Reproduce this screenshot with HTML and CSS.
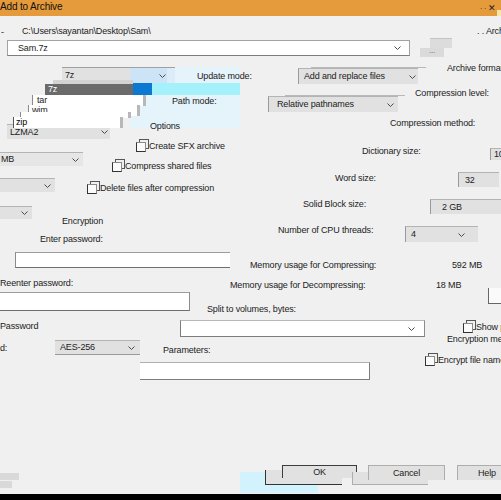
FILE: index.html
```html
<!DOCTYPE html>
<html lang="en">
<head>
<meta charset="utf-8">
<title>Add to Archive</title>
<link rel="stylesheet" href="styles.css">
</head>
<body>
<div class="dlg">
  <div class="titlebar">
    <span class="ttl">Add to Archive</span>
    <span class="dots">. .</span>
    <span class="close">&#x2715;</span>
    <span class="tb-edge"></span>
  </div>

  <div class="band b1">
    <span class="t dash">-</span>
    <span class="t path">C:\Users\sayantan\Desktop\Sam\</span>
    <span class="t arch">. . Archive:</span>
  </div>

  <div class="band b2">
    <div class="cw name-combo"><span>Sam.7z</span><svg class="chev" viewBox="0 0 7 4" width="7" height="4"><polyline points="0.5,0.5 3.5,3.5 6.5,0.5"/></svg></div>
    <div class="browse">
      <div class="browse-ghost"></div>
      <div class="browse-btn">...</div>
    </div>
  </div>

  <div class="band b3">
    <div class="fmt-wrap">
      <div class="fmt-panel"></div>
      <div class="cb fmt-combo"><span>7z</span><svg class="chev" viewBox="0 0 7 4" width="7" height="4"><polyline points="0.5,0.5 3.5,3.5 6.5,0.5"/></svg></div>
      <div class="dd dd-ghost"></div>
      <div class="dd dd-sel">7z</div>
      <div class="dd dd-blue"></div>
      <div class="dd dd-cyan"></div>
      <div class="dd dd-item dd-tar">tar</div>
      <div class="dd dd-item dd-wim">wim</div>
      <div class="dd dd-item dd-fill"></div>
      <div class="dd dd-item dd-zip">zip</div>
    </div>
    <span class="t lbl-update">Update mode:</span>
    <div class="cb upd-combo"><span>Add and replace files</span><svg class="chev" viewBox="0 0 7 4" width="7" height="4"><polyline points="0.5,0.5 3.5,3.5 6.5,0.5"/></svg></div>
    <span class="t lbl-format">Archive format</span>
  </div>

  <div class="band b4">
    <span class="t lbl-path">Path mode:</span>
    <div class="cb path-combo"><span>Relative pathnames</span><svg class="chev" viewBox="0 0 7 4" width="7" height="4"><polyline points="0.5,0.5 3.5,3.5 6.5,0.5"/></svg></div>
    <span class="t lbl-level">Compression level:</span>
  </div>

  <div class="band b5">
    <div class="cb lzma-combo"><span>LZMA2</span><svg class="chev" viewBox="0 0 7 4" width="7" height="4"><polyline points="0.5,0.5 3.5,3.5 6.5,0.5"/></svg></div>
    <span class="t lbl-options">Options</span>
    <span class="t lbl-method">Compression method:</span>
  </div>

  <div class="band b6">
    <div class="cb mb-combo"><span>MB</span><svg class="chev" viewBox="0 0 7 4" width="7" height="4"><polyline points="0.5,0.5 3.5,3.5 6.5,0.5"/></svg></div>
    <label class="chk chk-sfx"><span class="box"></span><span class="t">Create SFX archive</span></label>
    <span class="t lbl-dict">Dictionary size:</span>
    <div class="cb dict-combo"><span>10</span></div>
  </div>

  <div class="band b7">
    <div class="cb small1"><svg class="chev" viewBox="0 0 7 4" width="7" height="4"><polyline points="0.5,0.5 3.5,3.5 6.5,0.5"/></svg></div>
    <label class="chk chk-shared"><span class="box"></span><span class="t">Compress shared files</span></label>
    <span class="t lbl-word">Word size:</span>
    <div class="cb word-combo"><span>32</span></div>
  </div>

  <div class="band b8">
    <label class="chk chk-delete"><span class="box"></span><span class="t">Delete files after compression</span></label>
    <div class="cb block-combo"><span>2 GB</span></div>
  </div>

  <div class="band b9">
    <div class="cb small2"><svg class="chev" viewBox="0 0 7 4" width="7" height="4"><polyline points="0.5,0.5 3.5,3.5 6.5,0.5"/></svg></div>
    <span class="t lbl-enc">Encryption</span>
    <span class="t lbl-block">Solid Block size:</span>
  </div>

  <div class="band b10">
    <span class="t lbl-pass">Enter password:</span>
    <span class="t lbl-cpu">Number of CPU threads:</span>
    <div class="cb cpu-combo"><span>4</span><svg class="chev" viewBox="0 0 7 4" width="7" height="4"><polyline points="0.5,0.5 3.5,3.5 6.5,0.5"/></svg></div>
  </div>

  <div class="band b11">
    <div class="cw pass-input"></div>
    <span class="t lbl-memc">Memory usage for Compressing:</span>
    <span class="t val-memc">592 MB</span>
  </div>

  <div class="band b12">
    <span class="t lbl-repass">Reenter password:</span>
    <span class="t lbl-memd">Memory usage for Decompressing:</span>
    <span class="t val-memd">18 MB</span>
    <div class="ghost-box"></div>
  </div>

  <div class="band b13">
    <div class="cw repass-input"></div>
    <span class="t lbl-split">Split to volumes, bytes:</span>
  </div>

  <div class="band b14">
    <span class="t lbl-password">Password</span>
    <div class="cw split-combo"><svg class="chev" viewBox="0 0 7 4" width="7" height="4"><polyline points="0.5,0.5 3.5,3.5 6.5,0.5"/></svg></div>
    <label class="chk chk-show"><span class="box"></span><span class="t">Show password</span></label>
  </div>

  <div class="band b15">
    <span class="t lbl-d">d:</span>
    <div class="cb aes-combo"><span>AES-256</span><svg class="chev" viewBox="0 0 7 4" width="7" height="4"><polyline points="0.5,0.5 3.5,3.5 6.5,0.5"/></svg></div>
    <span class="t lbl-params">Parameters:</span>
    <span class="t lbl-encm">Encryption method:</span>
  </div>

  <div class="band b16">
    <div class="cw params-input"></div>
    <label class="chk chk-names"><span class="box"></span><span class="t">Encrypt file names</span></label>
  </div>

  <div class="spacer"></div>

  <div class="band buttons">
    <div class="ghost-gray"></div>
    <div class="ok-wrap">
      <div class="ok-cyan"></div>
      <div class="ok-ghost"></div>
      <button class="btn ok">OK</button>
    </div>
    <div class="cancel-wrap">
      <div class="btn-ghost"></div>
      <button class="btn cancel">Cancel</button>
    </div>
    <button class="btn help">Help</button>
  </div>

  <div class="bottom-bar"></div>
</div>
</body>
</html>
```

FILE: styles.css
```css
html, body {
  margin: 0;
  padding: 0;
}
body {
  background: #f0f0f0;
  font-family: "Liberation Sans", Arial, sans-serif;
  font-size: 9px;
  letter-spacing: -0.15px;
  color: #222;
}
.dlg {
  width: 501px;
  height: 500px;
  overflow: hidden;
  display: flex;
  flex-direction: column;
}

/* title bar */
.titlebar {
  height: 16px;
  flex: none;
  background: #e59a3b;
  display: flex;
  align-items: flex-start;
}
.ttl {
  font-size: 10px;
  line-height: 14px;
  color: #111;
}
.dots {
  margin-left: auto;
  line-height: 14px;
  color: #333;
  font-size: 8px;
}
.close {
  font-size: 9px;
  line-height: 14px;
  margin-left: 2px;
  margin-top: 1px;
  color: #222;
}
.tb-edge {
  width: 4px;
  height: 6px;
  margin-top: 10px;
  margin-left: 1px;
  background: #f5e7a6;
}

/* generic */
.band {
  display: flex;
  align-items: flex-start;
  flex: none;
}
.t {
  line-height: 11px;
  white-space: nowrap;
  flex: none;
}
.chev {
  flex: none;
  margin-left: auto;
}
.chev polyline {
  fill: none;
  stroke: #4a4a4a;
  stroke-width: 1;
}
.cb {
  flex: none;
  display: flex;
  align-items: center;
  background: #e1e1e1;
  border-top: 1px solid #b4b4b4;
  box-sizing: border-box;
  white-space: nowrap;
  line-height: 11px;
  position: relative;
}
.cw {
  flex: none;
  display: flex;
  align-items: center;
  background: #fff;
  box-sizing: border-box;
  white-space: nowrap;
  line-height: 11px;
}
.chk {
  flex: none;
  display: flex;
  align-items: flex-start;
}
.chk .box {
  width: 10px;
  height: 10px;
  box-sizing: border-box;
  border-left: 1px solid #333;
  border-bottom: 1px solid #333;
  border-top: 1px solid #8a8a8a;
  border-right: 1px solid #8a8a8a;
  background: #fbfbfb;
  flex: none;
  margin-top: 1px;
  margin-right: 3px;
  box-shadow: 3px -3px 0 -1px #f0f0f0, 3px -3px 0 0 #555;
}

/* band heights */
.b1 { height: 24px; }
.b2 { height: 20px; }
.b3 { height: 32px; }
.b4 { height: 27px; }
.b5 { height: 21px; }
.b6 { height: 22px; }
.b7 { height: 22px; }
.b8 { height: 19px; }
.b9 { height: 22px; }
.b10 { height: 20px; }
.b11 { height: 25px; }
.b12 { height: 22px; }
.b13 { height: 25px; }
.b14 { height: 22px; }
.b15 { height: 20px; }
.b16 { height: 25px; }
.spacer { height: 76px; flex: none; }

/* band 1 */
.dash { width: 4px; margin-left: 1px; margin-top: 11px; }
.path { width: 455px; margin-left: 17px; margin-top: 10px; }
.arch { margin-top: 10px; }

/* band 2 */
.name-combo {
  margin-left: 7px;
  width: 403px;
  height: 16px;
  border: 1px solid #a2a2a2;
  border-bottom-color: #7d7d7d;
  padding-left: 10px;
}
.name-combo .chev { margin-right: 8px; }
.browse {
  margin-left: 10px;
  margin-top: -2px;
  display: flex;
  flex-direction: column;
}
.browse-ghost {
  margin-left: 10px;
  width: 22px;
  height: 9px;
  background: #dcdcdc;
  border-top: 1px solid #c4c4c4;
}
.browse-btn {
  width: 24px;
  height: 9px;
  background: #dadada;
  font-size: 8px;
  line-height: 6px;
  text-align: center;
  color: #555;
}

/* band 3 */
.fmt-wrap {
  position: relative;
  margin-left: 62px;
  margin-top: 7px;
  width: 113px;
  height: 16px;
  flex: none;
}
.fmt-panel {
  position: absolute;
  left: 68px;
  top: 0;
  width: 110px;
  height: 61px;
  background: #e5f3fb;
  z-index: -1;
}
.fmt-combo {
  width: 113px;
  height: 16px;
  padding-left: 3px;
  background: linear-gradient(to right, #e1e1e1 0, #e1e1e1 68px, #cde4f6 68px, #cde4f6 105px, #dcedf9 105px);
  border-top-color: #a0a0a0;
  z-index: 2;
}
.fmt-combo .chev { margin-right: 9px; }
.dd {
  position: absolute;
  z-index: 3;
  box-sizing: border-box;
  line-height: 11px;
}
.dd-ghost { left: -9px; top: 13px; width: 80px; height: 4px; background: #d3d3d3; }
.dd-sel {
  left: -17px; top: 17px; width: 88px; height: 11px;
  background: #6b6b6b; color: #fff; padding-left: 3px;
}
.dd-blue { left: 71px; top: 16px; width: 20px; height: 12px; background: #0b78d2; }
.dd-cyan { left: 90px; top: 16px; width: 88px; height: 12px; background: #a4f1fc; }
.dd-item {
  background: #fff;
  border-left: 1px solid #8a8a8a;
  box-shadow: 3px 0 0 #b8b8b8;
  height: 11px;
}
.dd-tar { left: -30px; top: 28px; width: 111px; padding-left: 4px; }
.dd-wim { left: -34px; top: 38px; width: 109px; padding-left: 3px; }
.dd-fill { left: -42px; top: 45px; width: 108px; height: 6px; }
.dd-zip { left: -49px; top: 50px; width: 107px; padding-left: 2px; border-left-color: #555; color: #000; }

.lbl-update { margin-left: 22px; margin-top: 11px; width: 101px; }
.upd-combo {
  margin-top: 8px;
  width: 120px;
  height: 16px;
  padding-left: 5px;
  border-left: 1px solid #9a9a9a;
}
.upd-combo::after {
  content: "";
  position: absolute;
  left: 12px;
  top: -2px;
  width: 115px;
  height: 1px;
  background: #b8b8b8;
}
.upd-combo .chev { margin-right: 2px; }
.lbl-format { margin-left: 29px; margin-top: 3px; }

/* band 4 */
.lbl-path { margin-left: 172px; margin-top: 4px; width: 96px; }
.path-combo {
  margin-top: 4px;
  width: 130px;
  height: 16px;
  padding-left: 8px;
  border-left: 1px solid #9a9a9a;
}
.path-combo::after {
  content: "";
  position: absolute;
  left: 16px;
  top: -2px;
  width: 120px;
  height: 1px;
  background: #b8b8b8;
}
.path-combo .chev { margin-right: 4px; }
.lbl-level { margin-left: 17px; margin-top: -4px; }

/* band 5 */
.lzma-combo {
  margin-left: 7px;
  margin-top: 5px;
  width: 103px;
  height: 15px;
  padding-left: 3px;
}
.lzma-combo .chev { margin-right: 2px; }
.lbl-options { margin-left: 40px; margin-top: 2px; width: 240px; }
.lbl-method { margin-top: -1px; }

/* band 6 */
.mb-combo {
  margin-top: 12px;
  width: 83px;
  height: 14px;
  padding-left: 1px;
  background: #e6e6e6;
}
.mb-combo .chev { margin-right: 4px; }
.chk-sfx { margin-left: 53px; margin-top: 1px; width: 224px; }
.lbl-dict { margin-top: 6px; width: 130px; padding-left: 2px; box-sizing: border-box; }
.dict-combo {
  margin-top: 8px;
  width: 20px;
  height: 12px;
  padding-left: 3px;
  border-left: 1px solid #999;
}

/* band 7 */
.small1 {
  margin-top: 16px;
  width: 55px;
  height: 14px;
}
.small1 .chev { margin-right: 4px; }
.chk-shared { margin-left: 57px; margin-top: -1px; width: 221px; }
.lbl-word { margin-top: 11px; width: 118px; padding-left: 2px; box-sizing: border-box; }
.word-combo {
  margin-left: 7px;
  margin-top: 10px;
  width: 41px;
  height: 15px;
  padding-left: 6px;
  border-left: 1px solid #999;
}

/* band 8 */
.chk-delete { margin-left: 87px; margin-top: -1px; width: 341px; }
.block-combo {
  margin-left: 2px;
  margin-top: 15px;
  width: 71px;
  height: 15px;
  padding-left: 11px;
  border-left: 1px solid #999;
}

/* band 9 */
.small2 {
  margin-top: 3px;
  width: 32px;
  height: 13px;
}
.small2 .chev { margin-right: 4px; }
.lbl-enc { margin-left: 30px; margin-top: 13px; width: 241px; }
.lbl-block { margin-top: -4px; }

/* band 10 */
.lbl-pass { margin-left: 40px; margin-top: 9px; width: 224px; }
.lbl-cpu { margin-left: 14px; margin-top: 0; width: 126px; }
.cpu-combo {
  margin-left: 1px;
  margin-top: 1px;
  width: 73px;
  height: 16px;
  padding-left: 5px;
  border-left: 1px solid #999;
}
.cpu-combo .chev { margin-right: 13px; }

/* band 11 */
.pass-input {
  margin-left: 15px;
  margin-top: 7px;
  width: 215px;
  height: 16px;
  border-top: 1px solid #9d9d9d;
  border-left: 1px solid #8c8c8c;
  border-bottom: 1px solid #6f6f6f;
}
.lbl-memc { margin-left: 20px; margin-top: 15px; width: 202px; }
.val-memc { margin-top: 15px; }

/* band 12 */
.lbl-repass { margin-top: 8px; width: 230px; }
.lbl-memd { margin-top: 10px; width: 206px; }
.val-memd { margin-top: 10px; width: 52px; }
.ghost-box {
  flex: none;
  margin-top: 18px;
  width: 14px;
  height: 15px;
  background: #fafafa;
  border-left: 1px solid #666;
  border-bottom: 1px solid #666;
}

/* band 13 */
.repass-input {
  width: 190px;
  height: 19px;
  border-top: 1px solid #9d9d9d;
  border-bottom: 1px solid #6f6f6f;
  border-right: 1px solid #8c8c8c;
}
.lbl-split { margin-left: 17px; margin-top: 12px; }

/* band 14 */
.lbl-password { margin-top: 4px; width: 175px; }
.split-combo {
  margin-left: 5px;
  margin-top: 3px;
  width: 245px;
  height: 17px;
  border-top: 1px solid #b8b8b8;
  border-left: 1px solid #7d7d7d;
  border-bottom: 1px solid #7d7d7d;
  border-right: 1px solid #8c8c8c;
}
.split-combo .chev { margin-right: 9px; }
.chk-show { margin-left: 38px; margin-top: 5px; }

/* band 15 */
.lbl-d { margin-top: 4px; width: 55px; }
.aes-combo {
  margin-top: 1px;
  width: 85px;
  height: 15px;
  padding-left: 5px;
  border-bottom: 1px solid #9a9a9a;
}
.aes-combo .chev { margin-right: 5px; }
.lbl-params { margin-left: 23px; margin-top: 6px; width: 284px; }
.lbl-encm { margin-top: -5px; }

/* band 16 */
.params-input {
  margin-left: 140px;
  margin-top: 3px;
  width: 230px;
  height: 18px;
  border-top: 1px solid #b0b0b0;
  border-bottom: 1px solid #7d7d7d;
  border-right: 1px solid #7d7d7d;
}
.chk-names { margin-left: 55px; margin-top: -4px; }

/* bottom buttons */
.buttons { height: 34px; }
.ghost-gray {
  flex: none;
  margin-top: 13px;
  width: 19px;
  height: 7px;
  background: #d9d9d9;
  box-shadow: -7px 8px 0 #d9d9d9;
}
.ok-wrap {
  position: relative;
  flex: none;
  margin-left: 221px;
  width: 117px;
  height: 34px;
}
.ok-cyan {
  position: absolute;
  left: 0;
  top: 12px;
  width: 78px;
  height: 21px;
  background: #d2f2fd;
}
.ok-ghost {
  position: absolute;
  left: 25px;
  top: 10px;
  width: 77px;
  height: 15px;
  background: #e1e1e1;
  border-left: 1px solid #333;
  border-bottom: 1px solid #333;
  box-sizing: border-box;
}
.btn {
  font-family: "Liberation Sans", Arial, sans-serif;
  font-size: 9px;
  letter-spacing: -0.15px;
  color: #222;
  background: #e1e1e1;
  margin: 0;
  padding: 0;
  line-height: 11px;
  box-sizing: border-box;
}
.ok {
  position: absolute;
  left: 42px;
  top: 5px;
  width: 75px;
  height: 13px;
  border: 1px solid #3c3c3c;
  border-bottom: none;
}
.cancel-wrap {
  position: relative;
  flex: none;
  margin-left: -5px;
  width: 93px;
  height: 34px;
}
.btn-ghost {
  position: absolute;
  left: 0;
  top: 12px;
  width: 76px;
  height: 13px;
  background: #e1e1e1;
  border-bottom: 1px solid #adadad;
  border-left: 1px solid #adadad;
  box-sizing: border-box;
}
.cancel {
  position: absolute;
  left: 16px;
  top: 5px;
  width: 77px;
  height: 15px;
  border: 1px solid #adadad;
  border-bottom: none;
}
.help {
  flex: none;
  margin-left: 12px;
  margin-top: 5px;
  width: 50px;
  height: 15px;
  border: 1px solid #adadad;
  border-bottom: none;
  text-align: left;
  padding-left: 20px;
}
.bottom-bar {
  flex: none;
  height: 6px;
  background: #000;
}
```
